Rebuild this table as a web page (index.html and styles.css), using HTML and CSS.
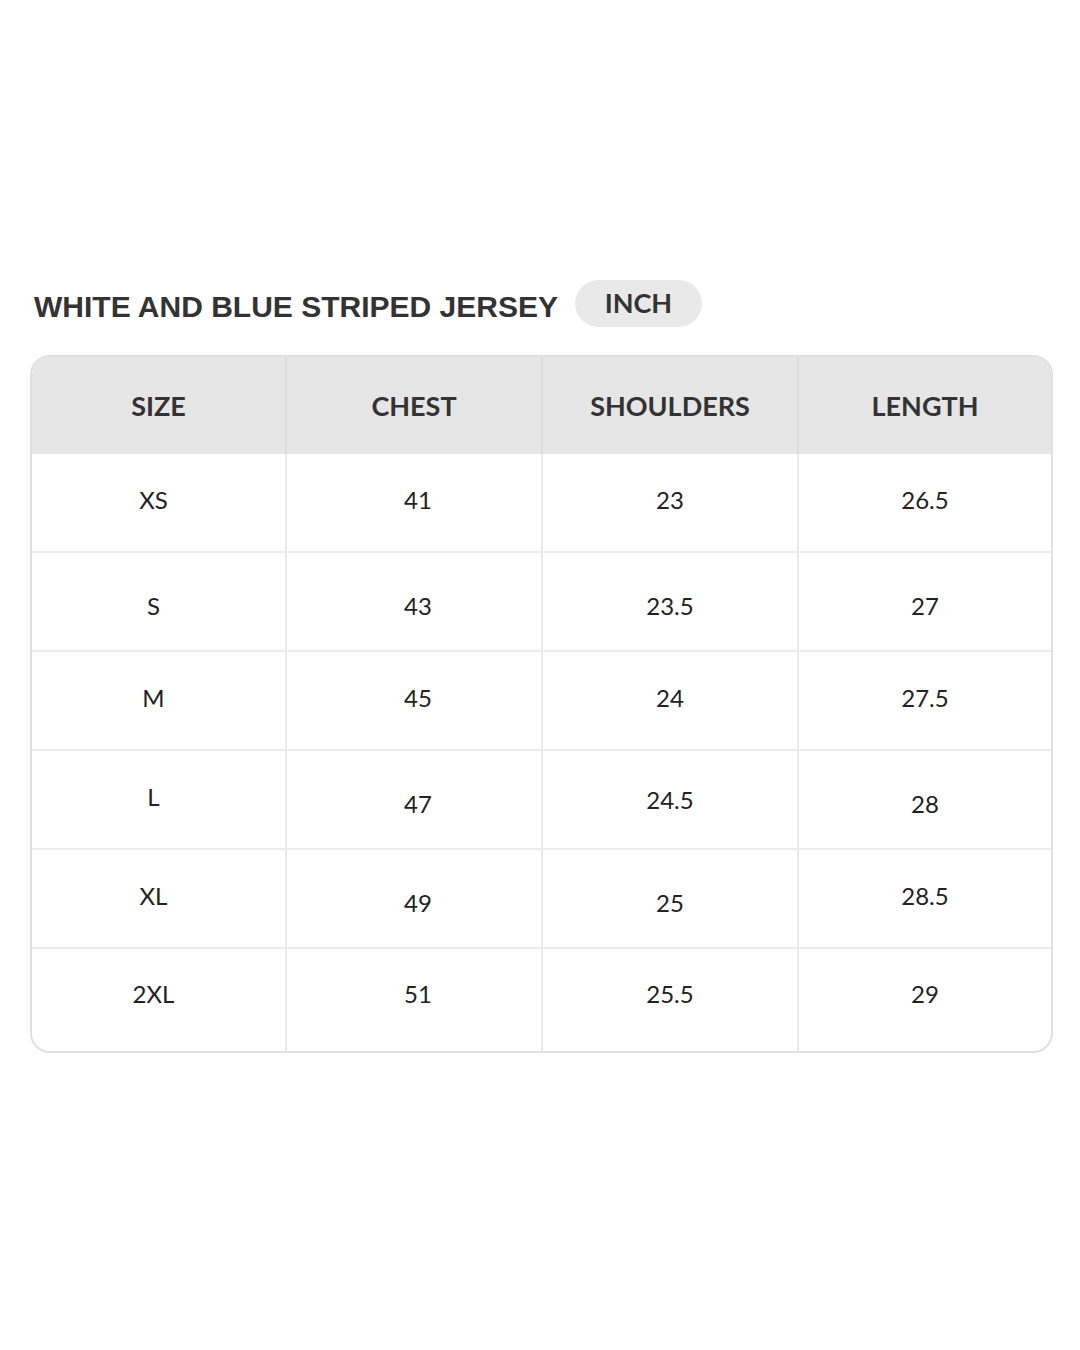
FILE: index.html
```html
<!DOCTYPE html>
<html lang="en">
<head>
<meta charset="utf-8">
<title>Size chart</title>
<link rel="stylesheet" href="styles.css">
</head>
<body>
<main class="page">
  <div class="heading">
    <h1 class="title">WHITE AND BLUE STRIPED JERSEY</h1>
    <span class="unit">INCH</span>
  </div>
  <div class="chart">
    <div class="row head">
      <div class="cell c1">SIZE</div>
      <div class="cell c2">CHEST</div>
      <div class="cell c3">SHOULDERS</div>
      <div class="cell c4">LENGTH</div>
    </div>
    <div class="row">
      <div class="cell c1 up">XS</div>
      <div class="cell c2 up">41</div>
      <div class="cell c3 up">23</div>
      <div class="cell c4 up">26.5</div>
    </div>
    <div class="row">
      <div class="cell c1 down">S</div>
      <div class="cell c2 down">43</div>
      <div class="cell c3 down">23.5</div>
      <div class="cell c4 down">27</div>
    </div>
    <div class="row">
      <div class="cell c1 up">M</div>
      <div class="cell c2 up">45</div>
      <div class="cell c3 up">24</div>
      <div class="cell c4 up">27.5</div>
    </div>
    <div class="row">
      <div class="cell c1 up">L</div>
      <div class="cell c2 down">47</div>
      <div class="cell c3">24.5</div>
      <div class="cell c4 down">28</div>
    </div>
    <div class="row">
      <div class="cell c1 up">XL</div>
      <div class="cell c2 down">49</div>
      <div class="cell c3 down">25</div>
      <div class="cell c4 up">28.5</div>
    </div>
    <div class="row last">
      <div class="cell c1 up2">2XL</div>
      <div class="cell c2 up2">51</div>
      <div class="cell c3 up2">25.5</div>
      <div class="cell c4 up2">29</div>
    </div>
  </div>
</main>
</body>
</html>
```
FILE: styles.css
```css
* { box-sizing: border-box; }
html, body {
  margin: 0;
  padding: 0;
  background: #ffffff;
}
body {
  width: 1080px;
  height: 1350px;
  font-family: Lato, "Noto Sans", sans-serif;
  color: #222;
}
.page {
  padding: 280px 27px 0 30px;
}
.heading {
  display: flex;
  align-items: center;
  gap: 17px;
  padding-left: 4px;
  height: 47px;
  margin-bottom: 28px;
}
.title {
  margin: 0;
  padding-top: 6px;
  font-family: "Liberation Sans", Arial, sans-serif;
  font-weight: 700;
  font-size: 30px;
  color: #333;
  letter-spacing: 0;
}
.unit {
  display: inline-flex;
  align-items: center;
  justify-content: center;
  width: 127px;
  height: 47px;
  border-radius: 24px;
  background: #e9e9e9;
  font-family: Lato, sans-serif;
  font-weight: 700;
  font-size: 27px;
  color: #333;
  padding-bottom: 2px;
}
.chart {
  width: 1023px;
  border: 2px solid #e0e0e0;
  border-radius: 20px;
  overflow: hidden;
}
.row {
  display: grid;
  grid-template-columns: 255px 256px 256px 1fr;
  height: 99px;
  border-bottom: 2px solid #ececec;
}
.row.head {
  height: 97px;
  background: #e6e6e6;
  border-bottom: none;
}
.row.last {
  height: 102px;
  border-bottom: none;
}
.cell {
  display: flex;
  align-items: center;
  justify-content: center;
  font-size: 24px;
  color: #222;
  border-right: 2px solid #e8e8e8;
}
.cell.c4 { border-right: none; }
.head .cell {
  font-weight: 700;
  font-size: 27px;
  color: #333;
  border-right-color: #dcdcdc;
  padding-top: 0;
}
.row:not(.head) .c1 { padding-right: 10px; }
.row:not(.head) .c2 { padding-left: 8px; }
.up { padding-bottom: 6px; }
.up2 { padding-bottom: 14px; }
.down { padding-top: 8px; }
```
